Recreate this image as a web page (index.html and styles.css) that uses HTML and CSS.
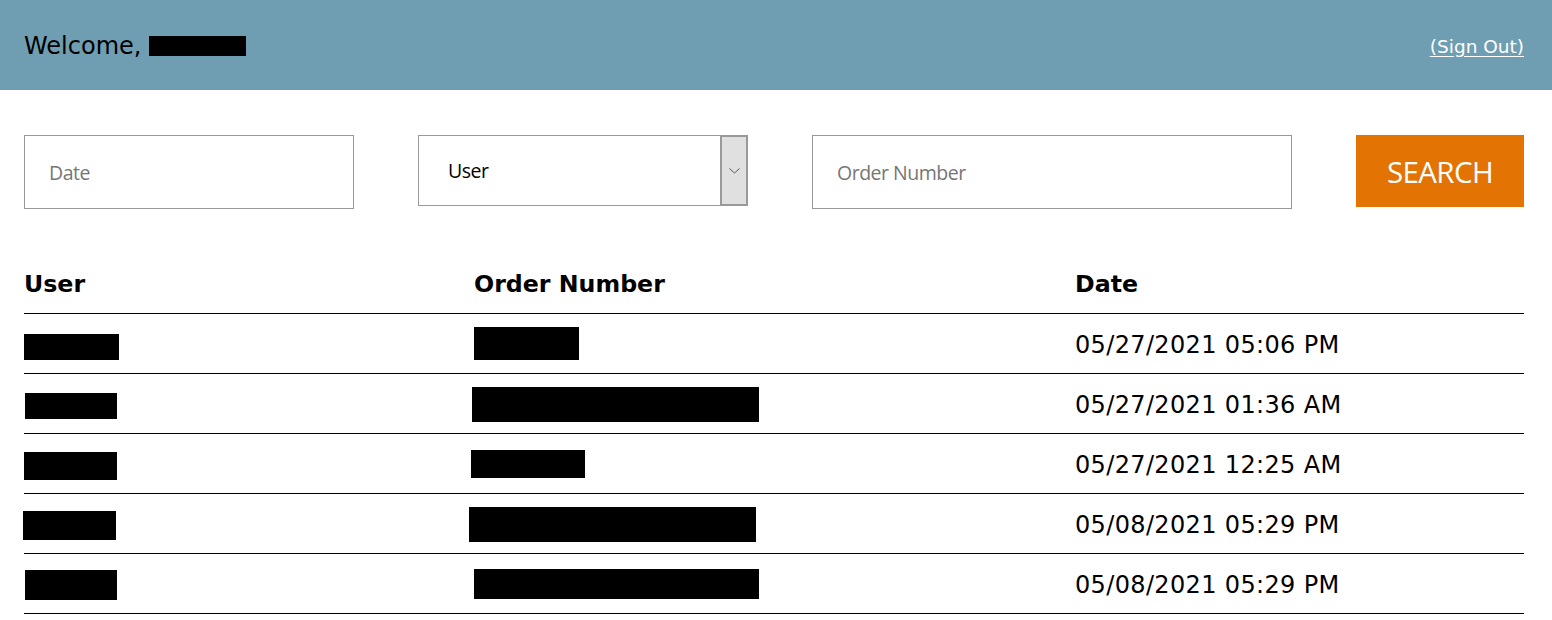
FILE: index.html
```html
<!DOCTYPE html>
<html lang="en">
<head>
<meta charset="utf-8">
<title>Orders</title>
<link rel="stylesheet" href="styles.css">
</head>
<body>
<header class="topbar">
  <div class="welcome">Welcome,<span class="redact redact-name"></span></div>
  <a class="signout" href="#">(Sign Out)</a>
</header>
<main class="content">
  <form class="filters">
    <input class="field field-date" type="text" placeholder="Date">
    <div class="select">
      <span class="select-value">User</span>
      <span class="select-arrow">
        <svg width="11" height="6" viewBox="0 0 11 6"><path d="M0.5 0.5 L5.5 5 L10.5 0.5" fill="none" stroke="#555" stroke-width="1"/></svg>
      </span>
    </div>
    <input class="field field-order" type="text" placeholder="Order Number">
    <button class="search" type="button">SEARCH</button>
  </form>
  <table class="orders">
    <colgroup><col class="c-user"><col class="c-order"><col class="c-date"></colgroup>
    <thead>
      <tr><th>User</th><th>Order Number</th><th>Date</th></tr>
    </thead>
    <tbody>
      <tr>
        <td><span class="redact" style="width:95px;height:26px;margin:4px 0 0 0"></span></td>
        <td><span class="redact" style="width:105px;height:33px;margin:-2px 0 0 0"></span></td>
        <td>05/27/2021 05:06 PM</td>
      </tr>
      <tr>
        <td><span class="redact" style="width:92px;height:26px;margin:0 0 0 1px"></span></td>
        <td><span class="redact" style="width:287px;height:35px;margin:0 0 0 -2px"></span></td>
        <td>05/27/2021 01:36 AM</td>
      </tr>
      <tr>
        <td><span class="redact" style="width:93px;height:28px;margin:2px 0 0 0"></span></td>
        <td><span class="redact" style="width:114px;height:28px;margin:-4px 0 0 -3px"></span></td>
        <td>05/27/2021 12:25 AM</td>
      </tr>
      <tr>
        <td><span class="redact" style="width:93px;height:29px;margin:2px 0 0 -1px"></span></td>
        <td><span class="redact" style="width:287px;height:35px;margin:0 0 0 -5px"></span></td>
        <td>05/08/2021 05:29 PM</td>
      </tr>
      <tr>
        <td><span class="redact" style="width:92px;height:30px;margin:1px 0 0 1px"></span></td>
        <td><span class="redact" style="width:285px;height:30px;margin:-1px 0 0 0"></span></td>
        <td>05/08/2021 05:29 PM</td>
      </tr>
    </tbody>
  </table>
</main>
</body>
</html>
```

FILE: styles.css
```css
* { box-sizing: border-box; }

html, body {
  margin: 0;
  padding: 0;
  background: #ffffff;
  color: #000000;
  font-family: "DejaVu Sans", Verdana, sans-serif;
}

.topbar {
  height: 90px;
  background: #6f9eb3;
  display: flex;
  align-items: center;
  justify-content: space-between;
  padding: 0 28px 0 24px;
}

.welcome {
  font-size: 24px;
  display: flex;
  align-items: center;
  line-height: 1;
  padding-top: 2px;
}

.redact {
  display: inline-block;
  background: #000000;
  vertical-align: middle;
}

.redact-name {
  width: 97px;
  height: 20px;
  margin-left: 8px;
  margin-top: 0;
}

.signout {
  color: #ffffff;
  font-size: 18.5px;
  text-decoration: underline;
  text-underline-offset: 3px;
  padding-top: 2px;
}

.content {
  padding: 45px 28px 0 24px;
}

.filters {
  display: flex;
  align-items: flex-start;
  gap: 64px;
  margin: 0;
}

.field {
  height: 74px;
  border: 1px solid #999999;
  border-radius: 0;
  padding: 0 24px;
  font-family: "Open Sans", "Noto Sans", sans-serif;
  font-size: 19.5px;
  letter-spacing: -0.5px;
  color: #000;
  background: #fff;
  outline: none;
  margin: 0;
}

.field::placeholder {
  color: #767676;
  opacity: 1;
}

.field-date { width: 330px; }
.field-order { width: 480px; }

.select {
  width: 330px;
  height: 71px;
  border: 1px solid #999999;
  display: flex;
  align-items: stretch;
  background: #fff;
}

.select-value {
  flex: 1;
  display: flex;
  align-items: center;
  padding-left: 29px;
  font-family: "Open Sans", "Noto Sans", sans-serif;
  font-size: 19.5px;
  letter-spacing: -0.5px;
  color: #000;
}

.select-arrow {
  width: 27px;
  background: #e0e0e0;
  border-left: 2px solid #9a9a9a;
  border-right: 1px solid #9a9a9a;
  border-top: 1px solid #9a9a9a;
  border-bottom: 1px solid #9a9a9a;
  display: flex;
  align-items: center;
  justify-content: center;
  margin: 0;
}

.search {
  width: 168px;
  height: 72px;
  border: none;
  border-radius: 0;
  background: #e37302;
  color: #ffffff;
  font-family: "Open Sans", "Noto Sans", sans-serif;
  font-size: 29.5px;
  letter-spacing: -0.6px;
  padding: 0;
  margin: 0;
  cursor: pointer;
}

.orders {
  width: 1500px;
  margin-top: 44px;
  border-collapse: collapse;
  table-layout: fixed;
}

.c-user { width: 450px; }
.c-order { width: 601px; }
.c-date { width: 449px; }

.orders th,
.orders td {
  text-align: left;
  padding: 0;
  height: 60px;
  border-bottom: 1px solid #000000;
  vertical-align: middle;
}

.orders th {
  font-size: 23.7px;
  font-weight: bold;
  padding-top: 3px;
}

.orders td {
  font-size: 24px;
  letter-spacing: 0.35px;
  padding-top: 3px;
}
```
